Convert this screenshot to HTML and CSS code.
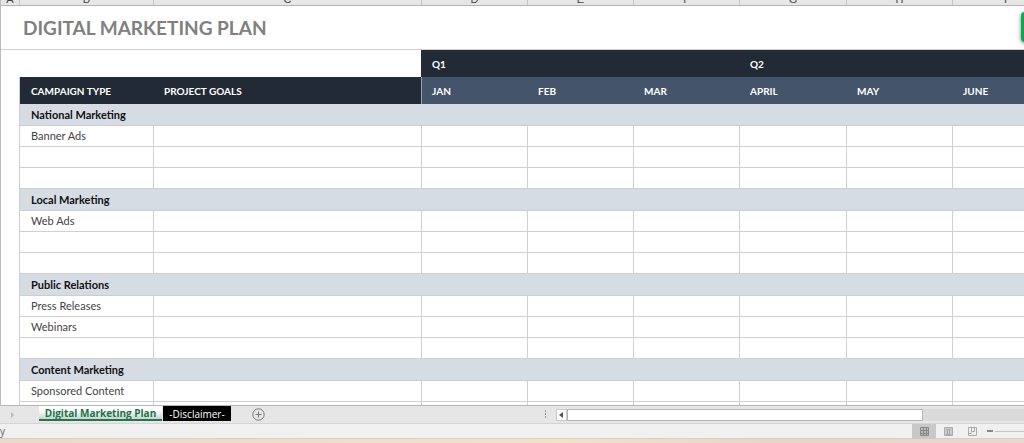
FILE: index.html
```
<!DOCTYPE html>
<html lang="en">
<head>
    <meta charset="UTF-8">
    <meta name="viewport" content="width=device-width, initial-scale=1.0">
    <title>Digital Marketing Plan</title>
    <link rel="stylesheet" href="styles.css">
</head>
<body>
    <main class="sheet">
        <div class="letters">
            <span class="letter col-a">A</span>
            <span class="letter col-b">B</span>
            <span class="letter col-c">C</span>
            <span class="letter col-m">D</span>
            <span class="letter col-m">E</span>
            <span class="letter col-m">F</span>
            <span class="letter col-g">G</span>
            <span class="letter col-m">H</span>
            <span class="letter col-m">I</span>
        </div>
        <header class="title-row">
            <h1>DIGITAL MARKETING PLAN</h1>
            <button class="template-btn" aria-label="Get template"></button>
        </header>
        <table class="plan">
            <colgroup>
                <col class="col-b"><col class="col-c">
                <col class="col-m"><col class="col-m"><col class="col-m">
                <col class="col-g"><col class="col-m"><col class="col-m">
            </colgroup>
            <thead>
                <tr class="quarters">
                    <td class="blank" colspan="2"></td>
                    <th colspan="3">Q1</th>
                    <th colspan="3">Q2</th>
                </tr>
                <tr class="months">
                    <th class="dark">CAMPAIGN TYPE</th>
                    <th class="dark">PROJECT GOALS</th>
                    <th>JAN</th>
                    <th>FEB</th>
                    <th>MAR</th>
                    <th>APRIL</th>
                    <th>MAY</th>
                    <th>JUNE</th>
                </tr>
            </thead>
            <tbody>
                <tr class="group"><th colspan="8">National Marketing</th></tr>
                <tr><td>Banner Ads</td><td></td><td></td><td></td><td></td><td></td><td></td><td></td></tr>
                <tr><td></td><td></td><td></td><td></td><td></td><td></td><td></td><td></td></tr>
                <tr><td></td><td></td><td></td><td></td><td></td><td></td><td></td><td></td></tr>
                <tr class="group"><th colspan="8">Local Marketing</th></tr>
                <tr><td>Web Ads</td><td></td><td></td><td></td><td></td><td></td><td></td><td></td></tr>
                <tr><td></td><td></td><td></td><td></td><td></td><td></td><td></td><td></td></tr>
                <tr><td></td><td></td><td></td><td></td><td></td><td></td><td></td><td></td></tr>
                <tr class="group"><th colspan="8">Public Relations</th></tr>
                <tr><td>Press Releases</td><td></td><td></td><td></td><td></td><td></td><td></td><td></td></tr>
                <tr><td>Webinars</td><td></td><td></td><td></td><td></td><td></td><td></td><td></td></tr>
                <tr><td></td><td></td><td></td><td></td><td></td><td></td><td></td><td></td></tr>
                <tr class="group"><th colspan="8">Content Marketing</th></tr>
                <tr><td>Sponsored Content</td><td></td><td></td><td></td><td></td><td></td><td></td><td></td></tr>
                <tr><td></td><td></td><td></td><td></td><td></td><td></td><td></td><td></td></tr>
            </tbody>
        </table>
    </main>

    <nav class="tabbar">
        <div class="tabs">
            <button class="next" aria-label="Next sheet">
                <svg width="5" height="6" viewBox="0 0 5 6"><path d="M1 0L4 3L1 6Z" fill="#b8b8b8"/></svg>
            </button>
            <button class="tab active">Digital Marketing Plan</button>
            <button class="tab disclaimer">-Disclaimer-</button>
            <button class="add" aria-label="New sheet">
                <svg width="13" height="13" viewBox="0 0 13 13" fill="none" stroke="#777"><circle cx="6.5" cy="6.5" r="5.7"/><path d="M6.5 3.5V9.5M3.5 6.5H9.5"/></svg>
            </button>
        </div>
        <svg class="dots" width="3" height="9" viewBox="0 0 3 9" fill="#999"><path d="M1 0h1v2H1zM1 3h1v2H1zM1 6h1v2H1z"/></svg>
        <div class="scroll">
            <button class="scroll-left" aria-label="Scroll left">
                <svg width="4" height="6" viewBox="0 0 4 6"><path d="M4 0V6L0 3Z" fill="#555"/></svg>
            </button>
            <div class="thumb"></div>
        </div>
    </nav>

    <footer class="status">
        <span class="ready">y</span>
        <button class="view selected" aria-label="Normal">
            <svg width="9" height="9" viewBox="0 0 9 9" fill="#b8b8b8" stroke="#888"><path d="M.5.5H8.5V8.5H.5ZM3.5.5V8.5M6.5.5V8.5M.5 3.5H8.5M.5 6.5H8.5"/></svg>
        </button>
        <button class="view" aria-label="Page layout">
            <svg width="9" height="9" viewBox="0 0 9 9" fill="#ccc" stroke="#aaa"><path d="M.5.5H8.5V8.5H.5Z"/><path d="M2 2.5H7M3.5 3V7.5H5.5V3M2 7.5H7"/></svg>
        </button>
        <button class="view" aria-label="Page break preview">
            <svg width="9" height="9" viewBox="0 0 9 9" fill="none" stroke="#aaa"><path d="M.5.5H8.5V8.5H.5Z"/><path d="M3.5 1V5.5M6.5 1V4.5H3.5M.5 6.5H3.5"/></svg>
        </button>
        <button class="minus" aria-label="Zoom out">
            <svg width="6" height="2" viewBox="0 0 6 2"><path d="M0 0H6V2H0Z" fill="#888"/></svg>
        </button>
        <input class="zoom" type="range" min="10" max="400" value="400" aria-label="Zoom">
    </footer>
    <div class="desktop"></div>
</body>
</html>
```
FILE: styles.css
```
* {
    box-sizing: border-box;
}
body {
    display: flex;
    flex-direction: column;
    height: 100vh;
    margin: 0;
    overflow: hidden;
    background-color: white;
    font-family: "Century Gothic", Lato, sans-serif;
    font-size: 11px;
}
button {
    padding: 0;
    border: 0;
    background: none;
    font: inherit;
}
svg {
    display: block;
}

/* Sheet */
.sheet {
    flex: 1;
    min-height: 0;
    overflow: hidden;
    border-left: 1px solid #bdbdbd;
}
.letters {
    display: flex;
    align-items: flex-end;
    height: 6px;
    overflow: hidden;
    background-color: #e6e6e6;
    border-bottom: 1px solid #b5b5b5;
}
.letter {
    flex-shrink: 0;
    height: 12px;
    line-height: 12px;
    border-left: 1px solid #c4c4c4;
    font-family: "Liberation Sans", sans-serif;
    color: #444;
    text-align: center;
}
.col-a {
    width: 18px;
    border-left: 0;
}
.col-b {
    width: 134px;
}
.col-c {
    width: 268px;
}
.col-m {
    width: 106px;
}
.col-g {
    width: 107px;
}
.title-row {
    position: relative;
    display: flex;
    align-items: center;
    height: 44px;
    padding-left: 22px;
    border-bottom: 1px solid #d0d0d0;
}
.title-row h1 {
    margin: 0;
    font-size: 19px;
    line-height: 24px;
    color: #808080;
}
/* hangs over the right edge of the sheet */
.template-btn {
    position: absolute;
    top: 6px;
    right: -27px;
    width: 30px;
    height: 30px;
    border-radius: 4px;
    background-color: #0aa84f;
    box-shadow: 0 1px 4px rgba(0, 0, 0, 0.5);
}

.plan {
    width: 1039px;
    margin-left: 18px;
    table-layout: fixed;
    border-collapse: separate;
    border-spacing: 0;
}
.plan th,
.plan td {
    height: 21px;
    padding: 0 0 0 11px;
    border-left: 1px solid #d0d0d0;
    border-bottom: 1px solid #d0d0d0;
    line-height: 16px;
    text-align: left;
    color: #444;
    white-space: nowrap;
}
.plan thead th {
    height: 27px;
    border: 0;
    font-size: 10px;
    color: white;
}
.plan .blank {
    border-left: 0;
    border-bottom: 0;
}
.quarters th {
    background-color: #222a35;
}
.months th {
    background-color: #44546a;
}
.months .dark {
    background-color: #222a35;
}
.plan thead .dark:first-child {
    border-left: 1px solid #d0d0d0;
}
.plan thead .dark + th:not(.dark) {
    border-left: 1px solid #9aa1ab;
    padding-left: 10px;
}
.plan .group th {
    height: 22px;
    background-color: #d6dce4;
    border-bottom-color: #c8ced6;
    color: #111;
}

/* Sheet tabs */
.tabbar {
    display: flex;
    align-items: center;
    height: 18px;
    background-color: #e6e6e6;
    border-top: 1px solid #b5b5b5;
    font-family: "Segoe UI", "Open Sans", sans-serif;
    font-size: 10px;
}
.tabs {
    display: flex;
    flex: 0 0 53%;
    align-items: flex-start;
    height: 17px;
}
.next {
    width: 39px;
    height: 17px;
    padding-left: 10px;
}
.tab {
    height: 15px;
    line-height: 12px;
    white-space: nowrap;
}
.active {
    width: 123px;
    background: linear-gradient(white 30%, #ccd0d8);
    border-bottom: 2px solid #1e7b45;
    font-weight: bold;
    color: #217346;
}
.disclaimer {
    width: 68px;
    margin-left: 1px;
    background-color: black;
    color: white;
}
.add {
    height: 17px;
    margin-left: 21px;
}
.dots {
    margin-left: 1px;
}
.scroll {
    display: flex;
    flex: 1;
    height: 12px;
    margin-left: 9px;
    background-color: #dadada;
}
.scroll-left {
    display: flex;
    align-items: center;
    justify-content: center;
    width: 11px;
    background-color: white;
    border: 1px solid #ccc;
}
.thumb {
    width: 76%;
    background-color: white;
    border: 1px solid #b5b5b5;
}

/* Status bar */
.status {
    display: flex;
    align-items: center;
    height: 16px;
    background-color: #f0f0f0;
    border-top: 1px solid #d5d5d5;
    border-bottom: 1px solid #d0d0d0;
    font-family: "Segoe UI", "Open Sans", sans-serif;
    color: #666;
}
.ready {
    margin-right: auto;
    font-size: 10px;
}
.view {
    display: flex;
    align-items: center;
    justify-content: center;
    width: 24px;
    height: 15px;
}
.selected {
    background-color: #c8c8c8;
}
.minus {
    width: 11px;
    padding-left: 3px;
}
.zoom {
    width: 29px;
    height: 1px;
    margin: 0;
    appearance: none;
    background-color: #c4c4c4;
}
.zoom::-webkit-slider-thumb {
    appearance: none;
    width: 0;
}
.desktop {
    height: 4px;
    background: linear-gradient(90deg, #ecd8c8, #f3e2c4 55%, #e8d5c8 75%, #ead8cc);
}
```
